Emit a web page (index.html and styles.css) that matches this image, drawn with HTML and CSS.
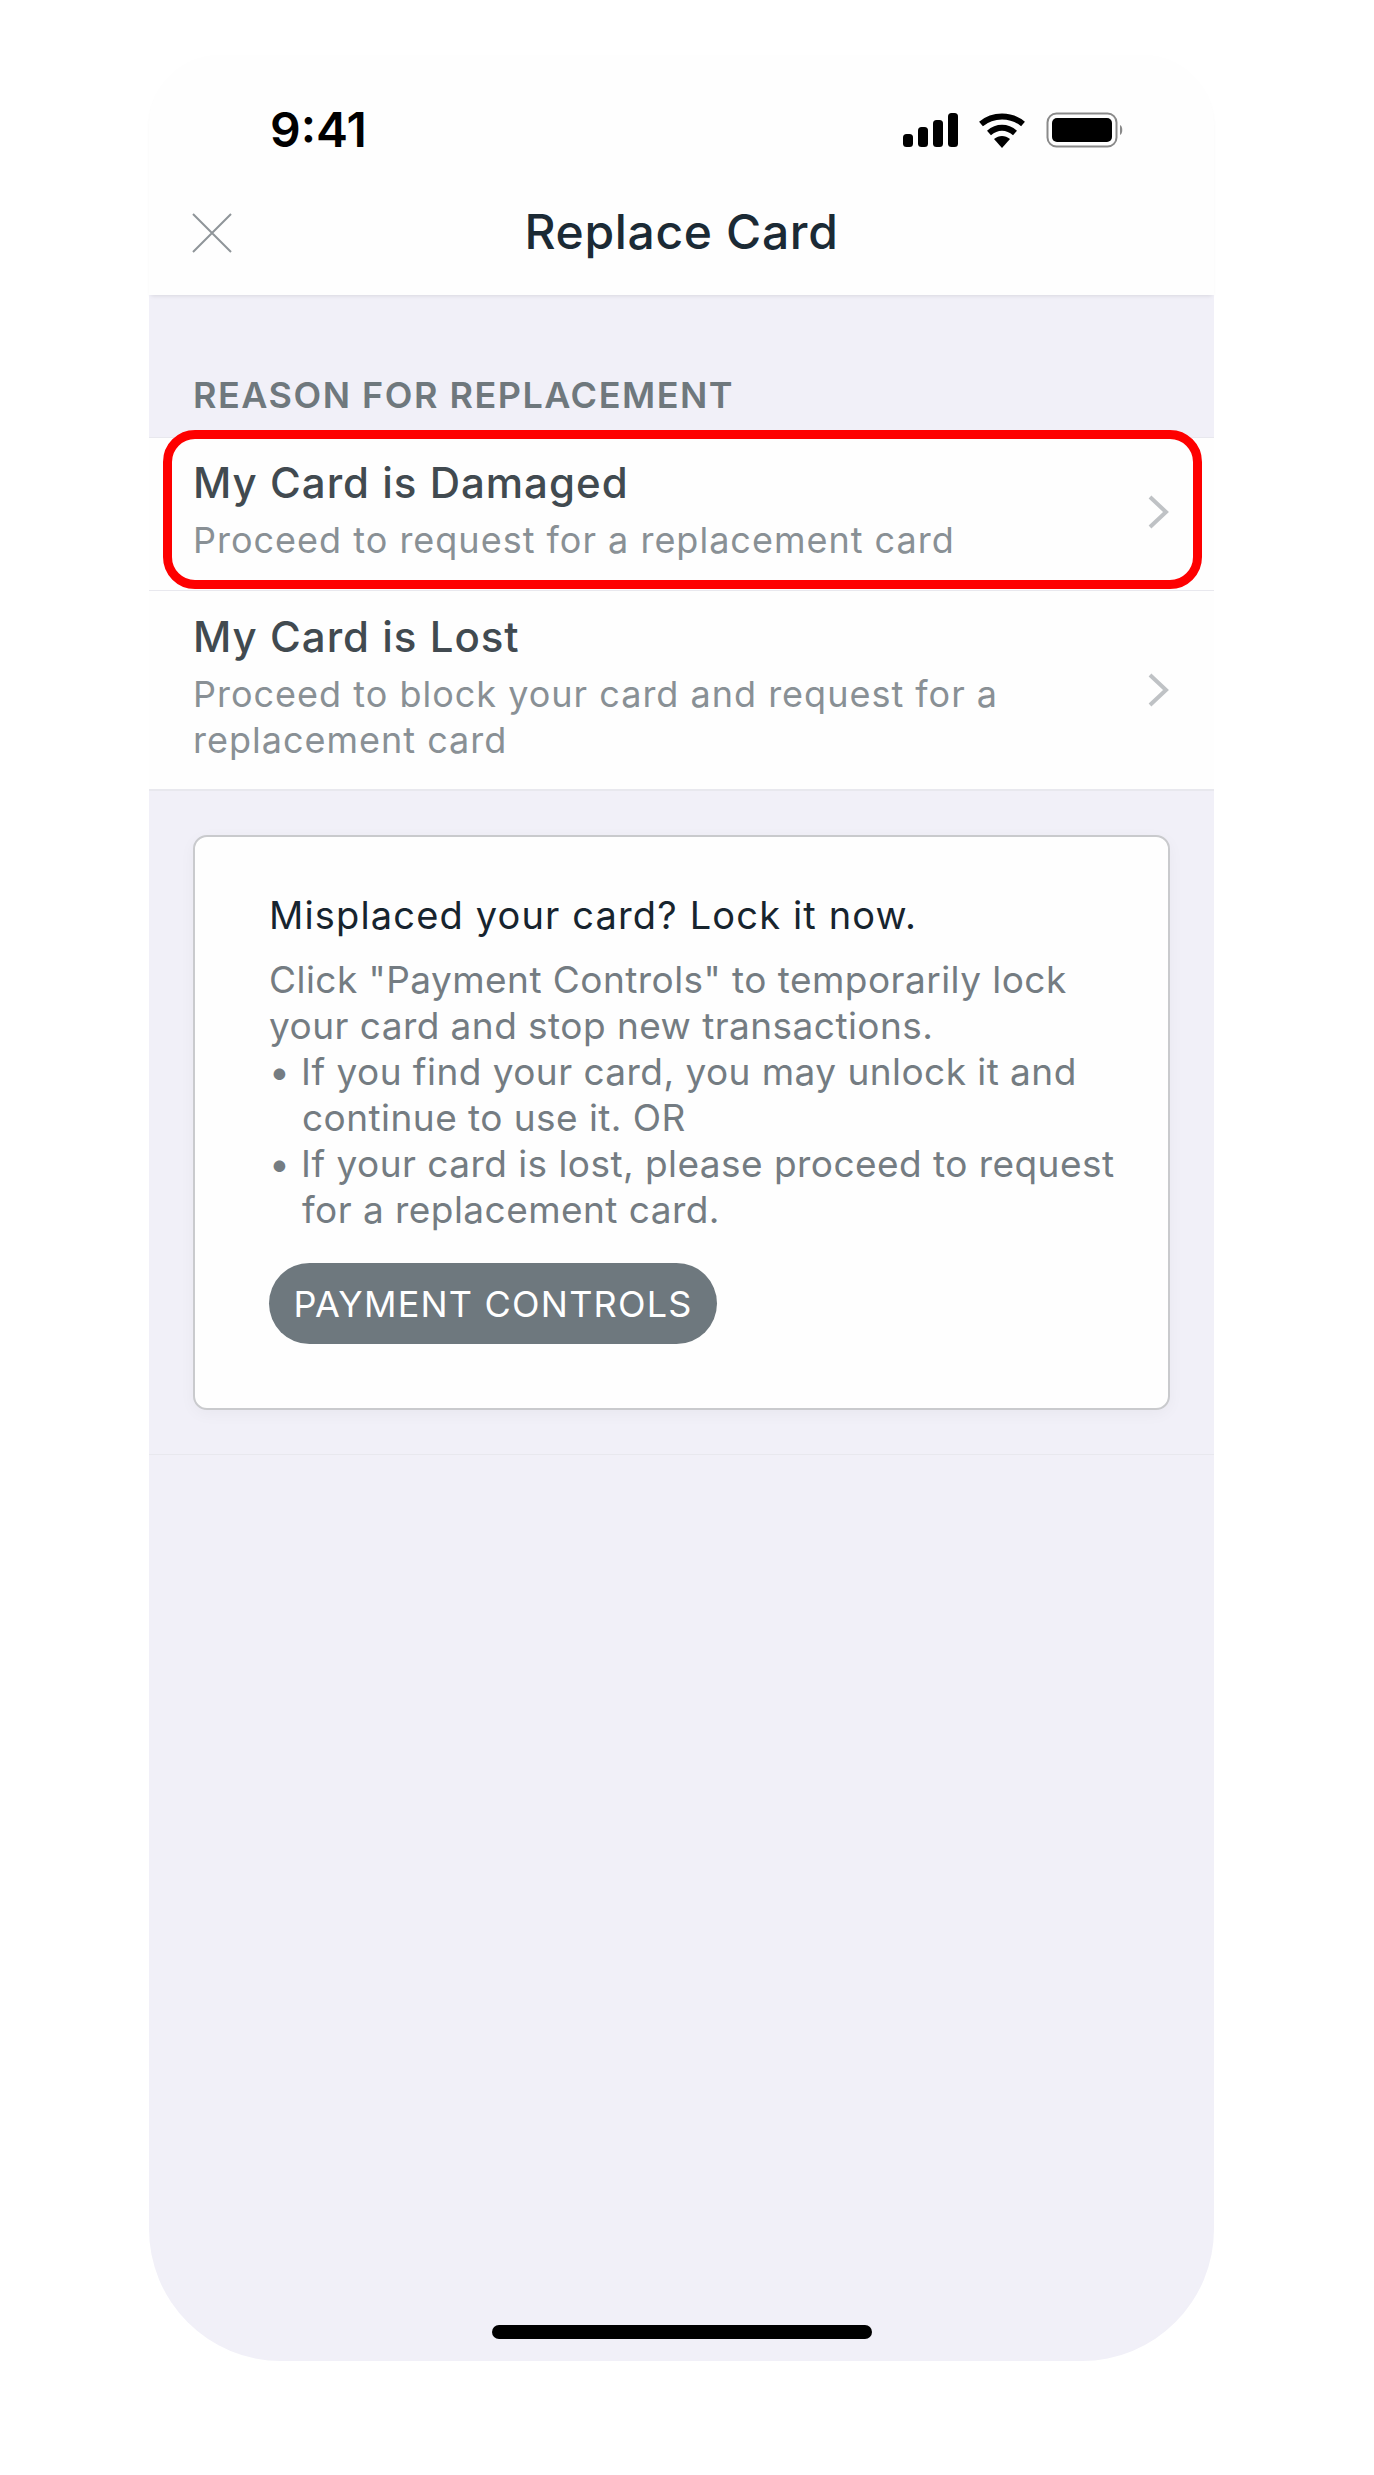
FILE: index.html
```html
<!DOCTYPE html>
<html lang="en">
<head>
<meta charset="utf-8">
<title>Replace Card</title>
<link rel="stylesheet" href="styles.css">
</head>
<body>
<main class="phone">
  <header class="top">
    <div class="status">
      <span class="clock">9:41</span>
      <div class="status-icons">
        <svg class="ic-signal" width="55" height="34" viewBox="0 0 55 34"><rect x="0" y="21" width="10" height="13" rx="3.5"/><rect x="15" y="14" width="10" height="20" rx="3.5"/><rect x="30" y="7" width="10" height="27" rx="3.5"/><rect x="45" y="0" width="10" height="34" rx="3.5"/></svg>
        <svg class="ic-wifi" width="48" height="35" viewBox="0 0 48 35"><path d="M3 11 C15 1 33 1 45 11" fill="none" stroke="#000" stroke-width="6"/><path d="M11 20 C19 13 29 13 37 20" fill="none" stroke="#000" stroke-width="6"/><path d="M16 26 C21 22 27 22 32 26 L24 35 Z"/></svg>
        <svg class="ic-battery" width="78" height="36" viewBox="0 0 78 36"><rect x="1.5" y="1.5" width="69" height="33" rx="9" fill="none" stroke="#8a8a8a" stroke-width="2"/><rect x="6" y="6" width="60" height="24" rx="5"/><path d="M74 13 C77 14 77 22 74 23 Z" fill="#8a8a8a"/></svg>
      </div>
    </div>
    <div class="nav">
      <svg class="ic-close" width="40" height="40" viewBox="0 0 40 40"><path d="M1 1 L39 39 M39 1 L1 39" fill="none" stroke="#8f9599" stroke-width="2"/></svg>
      <h1 class="title">Replace Card</h1>
    </div>
  </header>

  <div class="content">
    <h2 class="section-label">REASON FOR REPLACEMENT</h2>

    <section class="rows">
      <div class="row">
        <div class="row-text">
          <div class="row-title">My Card is Damaged</div>
          <div class="row-sub">Proceed to request for a replacement card</div>
        </div>
        <svg class="ic-chevron" width="21" height="34" viewBox="0 0 21 34"><path d="M2 2 L18 17 L2 32" fill="none" stroke="#bfc2c5" stroke-width="4"/></svg>
      </div>
      <div class="row">
        <div class="row-text">
          <div class="row-title">My Card is Lost</div>
          <div class="row-sub">Proceed to block your card and request for a<br>replacement card</div>
        </div>
        <svg class="ic-chevron" width="21" height="34" viewBox="0 0 21 34"><path d="M2 2 L18 17 L2 32" fill="none" stroke="#bfc2c5" stroke-width="4"/></svg>
      </div>
    </section>

    <section class="card-wrap">
      <div class="card">
        <h3 class="card-title">Misplaced your card? Lock it now.</h3>
        <div class="card-body">
          <p class="para">Click "Payment Controls" to temporarily lock<br>your card and stop new transactions.</p>
          <p class="bullet">• If you find your card, you may unlock it and<br>continue to use it. OR</p>
          <p class="bullet">• If your card is lost, please proceed to request<br>for a replacement card.</p>
        </div>
        <button class="btn">PAYMENT CONTROLS</button>
      </div>
    </section>
  </div>

  <div class="highlight"></div>
  <div class="home-bar"></div>
</main>
</body>
</html>
```
FILE: styles.css
```css
* { box-sizing: border-box; }
html, body { margin: 0; padding: 0; background: #fff; }
body {
  width: 1374px;
  height: 2475px;
  padding: 55px 0 0 149px;
  font-family: Inter, "Noto Sans", sans-serif;
}
.phone {
  position: relative;
  width: 1065px;
  height: 2306px;
  display: flex;
  flex-direction: column;
}
.top {
  position: relative;
  z-index: 1;
  height: 240px;
  background: #fefefe;
  border-radius: 70px 70px 0 0;
  box-shadow: 0 3px 4px -2px rgba(0, 0, 0, 0.1);
}
.content {
  flex: 1;
  background: #f1f0f8;
  border-radius: 0 0 132px 132px;
}
.status {
  height: 150px;
  display: flex;
  justify-content: space-between;
  align-items: center;
  padding: 0 90px 0 121px;
}
.clock { font-size: 48px; font-weight: 600; color: #000; line-height: 1; }
.status-icons { display: flex; align-items: center; gap: 20px; }
.nav {
  position: relative;
  height: 54px;
  display: flex;
  align-items: center;
  justify-content: center;
}
.ic-close { position: absolute; left: 43px; top: 8px; }
.title { margin: 0; font-size: 48px; letter-spacing: 0.65px; font-weight: 500; color: #1b2a35; line-height: 54px; }
.section-label {
  margin: 0;
  padding: 77px 44px 19px;
  font-size: 36px;
  letter-spacing: 1.5px;
  line-height: 46px;
  font-weight: 600;
  color: #6f787d;
}
.rows { background: #fefefe; border-top: 1px solid #e8e8ee; border-bottom: 2px solid #e8e8ee; }
.row {
  display: flex;
  align-items: center;
  justify-content: space-between;
  padding: 22px 45px 27px 44px;
}
.row + .row { padding: 23px 45px 26px 44px; border-top: 1px solid #e8e8ee; }
.row + .row .ic-chevron { margin-top: 2px; }
.row-title { font-size: 42px; letter-spacing: 1px; line-height: 46px; font-weight: 500; color: #414a50; }
.row-sub { margin-top: 11px; font-size: 36px; letter-spacing: 1px; line-height: 46px; color: #899095; }
.highlight {
  position: absolute;
  left: 14px;
  top: 375px;
  width: 1039px;
  height: 159px;
  border: 9px solid #fe0000;
  border-radius: 32px;
}
.card-wrap { padding: 44px 44px 44px 44px; border-bottom: 1px solid #e8e8ee; }
.card {
  height: 575px;
  padding: 55px 0 0 74px;
  background: #fefefe;
  border: 2px solid #c9cacd;
  border-radius: 14px;
  box-shadow: 0 4px 16px rgba(0, 0, 0, 0.04);
}
.card-title { margin: 0; font-size: 38px; letter-spacing: 1.15px; line-height: 46px; font-weight: 400; color: #17242e; }
.card-body { margin-top: 19px; font-size: 37px; letter-spacing: 0.45px; line-height: 46px; color: #747c82; }
.para, .bullet { margin: 0; }
.bullet { padding-left: 33px; text-indent: -33px; }
.btn {
  display: block;
  margin-top: 30px;
  width: 448px;
  height: 81px;
  padding: 0;
  border: 0;
  border-radius: 41px;
  background: #6e787e;
  color: #fff;
  font-family: inherit;
  font-size: 36px;
  letter-spacing: 1.2px;
  text-align: center;
}
.home-bar {
  position: absolute;
  left: 343px;
  bottom: 22px;
  width: 380px;
  height: 14px;
  border-radius: 7px;
  background: #000;
}
```
